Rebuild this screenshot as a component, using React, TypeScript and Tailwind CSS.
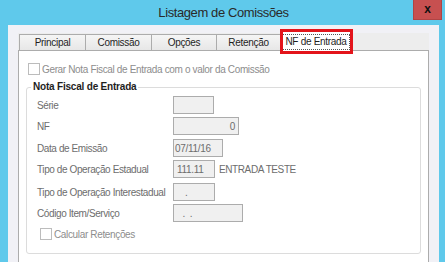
import React from 'react';

/**
 * Listagem de Comissões – NF de Entrada tab (disabled state)
 */

const tabs = [
  { label: 'Principal', w: 'w-[67px] ml-[1px]' },
  { label: 'Comissão', w: 'w-[67px] -ml-px' },
  { label: 'Opções', w: 'w-[66px] -ml-px' },
  { label: 'Retenção', w: 'w-[65px] -ml-px' },
];

const Field: React.FC<{ label: string; className: string; value?: string; right?: boolean; extra?: string }> = ({
  label,
  className,
  value = '',
  right = false,
  extra,
}) => (
  <div className="flex items-center h-[18px]">
    <span className="w-[136px] shrink-0 text-[10px] tracking-[-0.4px] text-[#6d6d6d]">{label}</span>
    <div
      className={`h-[18px] border border-[#acacac] bg-[#f0f0f0] flex items-center text-[10px] tracking-[-0.3px] text-[#6d6d6d] whitespace-pre ${
        right ? 'justify-end pr-[3px]' : 'pl-[1px]'
      } ${className}`}
    >
      {value}
    </div>
    {extra && <span className="ml-[4px] text-[10px] tracking-[-0.4px] text-[#6d6d6d]">{extra}</span>}
  </div>
);

export default function App() {
  return (
    <div className="w-[445px] h-[262px] overflow-hidden bg-[#5fc9eb] flex flex-col pl-[8px] pr-[6px] font-['Liberation_Sans',Arial,sans-serif]">
      {/* Title bar */}
      <div className="relative h-[25px] shrink-0 flex items-center justify-center">
        <span className="text-[13px] tracking-[-0.4px] text-[#2a2a2a]">Listagem de Comissões</span>
        <div className="absolute right-[-3px] top-0 w-[29px] h-[20px] bg-[#c75050] border border-[#b04444] border-t-0 flex items-center justify-center">
          <span className="text-[12px] font-bold leading-none text-[#111] -mt-[2px]">x</span>
        </div>
      </div>

      {/* Client area */}
      <div className="shrink-0 bg-[#f1f1f6] pl-[10px] pr-[10px] pt-[6px] flex flex-col">
        {/* Tab strip */}
        <div className="relative h-[19px] flex items-end bg-[linear-gradient(to_bottom,transparent_2px,#ededed_2px)]">
          {tabs.map((t) => (
            <div
              key={t.label}
              className={`${t.w} h-[16px] shrink-0 border border-b-0 border-[#acacac] bg-gradient-to-b from-[#f5f5f5] to-[#e7e7e7] flex items-center justify-center text-[10px] tracking-[-0.3px] text-[#1e1e1e]`}
            >
              {t.label}
            </div>
          ))}
          <div className="relative z-10 w-[70px] h-[20px] -mb-px shrink-0 border border-b-0 border-[#acacac] bg-white flex items-center justify-center">
            <span className="border border-dotted border-[#555] px-[2px] h-[16px] leading-[14px] text-[10px] tracking-[-0.3px] text-[#1e1e1e]">
              NF de Entrada
            </span>
          </div>
          {/* highlight */}
          <div className="absolute z-20 left-[262px] top-[-2px] w-[73px] h-[25px] border-[3px] border-[#e3141b]" />
        </div>

        {/* Tab panel */}
        <div className="h-[225px] shrink-0 bg-white border border-[#acacac] pl-[7px] pr-[7px] pt-[12px] flex flex-col">
          <div className="ml-[2px] h-[12px] flex items-center gap-[2px]">
            <div className="w-[12px] h-[12px] border border-[#bcbcbc] bg-white" />
            <span className="text-[10px] tracking-[-0.35px] text-[#8d8d8d]">
              Gerar Nota Fiscal de Entrada com o valor da Comissão
            </span>
          </div>

          <fieldset className="mt-[6px] h-[173px] border border-[#dcdcdc] rounded-[3px]">
            <legend className="ml-[4px] px-[2px] h-[12px] leading-[12px] text-[10px] font-bold tracking-[-0.2px] text-[#1e1e1e]">
              Nota Fiscal de Entrada
            </legend>
            <div className="pl-[10px] pt-[3px] flex flex-col">
              <Field label="Série" className="w-[41px]" />
              <div className="mt-[3px]">
                <Field label="NF" className="w-[66px]" value="0" right />
              </div>
              <div className="mt-[4px]">
                <Field label="Data de Emissão" className="w-[50px]" value="07/11/16" />
              </div>
              <div className="mt-[3px]">
                <Field label="Tipo de Operação Estadual" className="w-[42px] !pl-[3px]" value="111.11" extra="ENTRADA TESTE" />
              </div>
              <div className="mt-[5px]">
                <Field label="Tipo de Operação Interestadual" className="w-[42px]" value="    .  " />
              </div>
              <div className="mt-[3px]">
                <Field label="Código Item/Serviço" className="w-[70px]" value="   .  .  " />
              </div>
              <div className="mt-[6px] ml-[3px] h-[12px] flex items-center gap-[2px]">
                <div className="w-[12px] h-[12px] border border-[#bcbcbc] bg-white" />
                <span className="text-[10px] tracking-[-0.35px] text-[#8d8d8d]">Calcular Retenções</span>
              </div>
            </div>
          </fieldset>
        </div>
      </div>
    </div>
  );
}
